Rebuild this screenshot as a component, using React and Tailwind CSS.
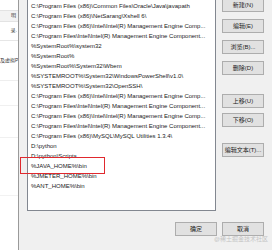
import React from "react";

const paths = [
  "C:\\Program Files (x86)\\Common Files\\Oracle\\Java\\javapath",
  "C:\\Program Files (x86)\\NetSarang\\Xshell 6\\",
  "C:\\Program Files (x86)\\Intel\\Intel(R) Management Engine Comp...",
  "C:\\Program Files\\Intel\\Intel(R) Management Engine Component...",
  "%SystemRoot%\\system32",
  "%SystemRoot%",
  "%SystemRoot%\\System32\\Wbem",
  "%SYSTEMROOT%\\System32\\WindowsPowerShell\\v1.0\\",
  "%SYSTEMROOT%\\System32\\OpenSSH\\",
  "C:\\Program Files (x86)\\Intel\\Intel(R) Management Engine Comp...",
  "C:\\Program Files\\Intel\\Intel(R) Management Engine Component...",
  "C:\\Program Files (x86)\\Intel\\Intel(R) Management Engine Comp...",
  "C:\\Program Files\\Intel\\Intel(R) Management Engine Component...",
  "C:\\Program Files (x86)\\MySQL\\MySQL Utilities 1.3.4\\",
  "D:\\python",
  "D:\\python\\Scripts",
  "%JAVA_HOME%\\bin",
  "%JMETER_HOME%\\bin",
  "%ANT_HOME%\\bin",
];

const Btn = ({ children, className = "" }) => (
  <div
    className={`h-[14px] w-[42px] shrink-0 border border-[#adadad] bg-[#e1e1e1] flex items-center justify-center text-[6px] leading-none text-[#222] ${className}`}
  >
    {children}
  </div>
);

export default function App() {
  return (
    <div
      className="relative w-[272px] h-[250px] overflow-hidden flex bg-white"
      style={{ fontFamily: '"Liberation Sans", "Noto Sans CJK SC", sans-serif' }}
    >
      {/* window behind the dialog */}
      <div className="w-[18px] shrink-0 bg-white flex flex-col text-[5px] text-[#333] overflow-hidden">
        <div className="h-[10px]" />
        <div className="h-[12px] bg-[#f3f3f3] border-y border-[#e3e3e3] flex items-center justify-end pr-[2px] whitespace-nowrap">
          明
        </div>
        <div className="h-[19px] border-b border-[#e6e6e6] flex items-center justify-end pr-px whitespace-nowrap">
          录.
        </div>
        <div className="h-[40px] border-b border-[#eeeeee] pt-[16px] whitespace-nowrap">
          及虚拟P
        </div>
        <div className="h-[25px] border-b border-[#f0f0f0]" />
        <div className="h-[32px] border-b border-[#f0f0f0]" />
        <div className="h-[58px] border-b border-[#f2f2f2]" />
      </div>

      {/* dialog */}
      <div className="flex-1 bg-[#f0f0f0] border-l border-[#9a9a9a] flex flex-col pl-[8px] pr-[8px]">
        <div className="flex gap-[6px]">
          <div className="w-[189px] h-[211px] shrink-0 bg-white border-x border-b border-[#828790] pt-px pl-[3px] overflow-hidden">
            {paths.map((p, i) => (
              <div
                key={i}
                className="h-[10px] leading-[10px] text-[6px] text-[#1a1a1a] whitespace-nowrap"
              >
                {p}
              </div>
            ))}
          </div>
          <div className="flex flex-col">
            <Btn className="-mt-[2px]">新建(N)</Btn>
            <Btn className="mt-[7px]">编辑(E)</Btn>
            <Btn className="mt-[7px]">浏览(B)...</Btn>
            <Btn className="mt-[7px]">删除(D)</Btn>
            <Btn className="mt-[19px]">上移(U)</Btn>
            <Btn className="mt-[5px]">下移(O)</Btn>
            <Btn className="mt-[16px]">编辑文本(T)...</Btn>
          </div>
        </div>
        <div className="flex justify-end gap-[5px] mt-[11px]">
          <Btn className="w-[41px]">确定</Btn>
          <Btn>取消</Btn>
        </div>
      </div>

      {/* annotation */}
      <div className="absolute left-[20px] top-[157px] w-[85px] h-[17px] border-[1.5px] border-[#e0292e]" />
      <div className="absolute left-[214px] top-[236px] text-[6px] leading-none text-[#c4c4c4] whitespace-nowrap">
        @稀土掘金技术社区
      </div>
    </div>
  );
}
